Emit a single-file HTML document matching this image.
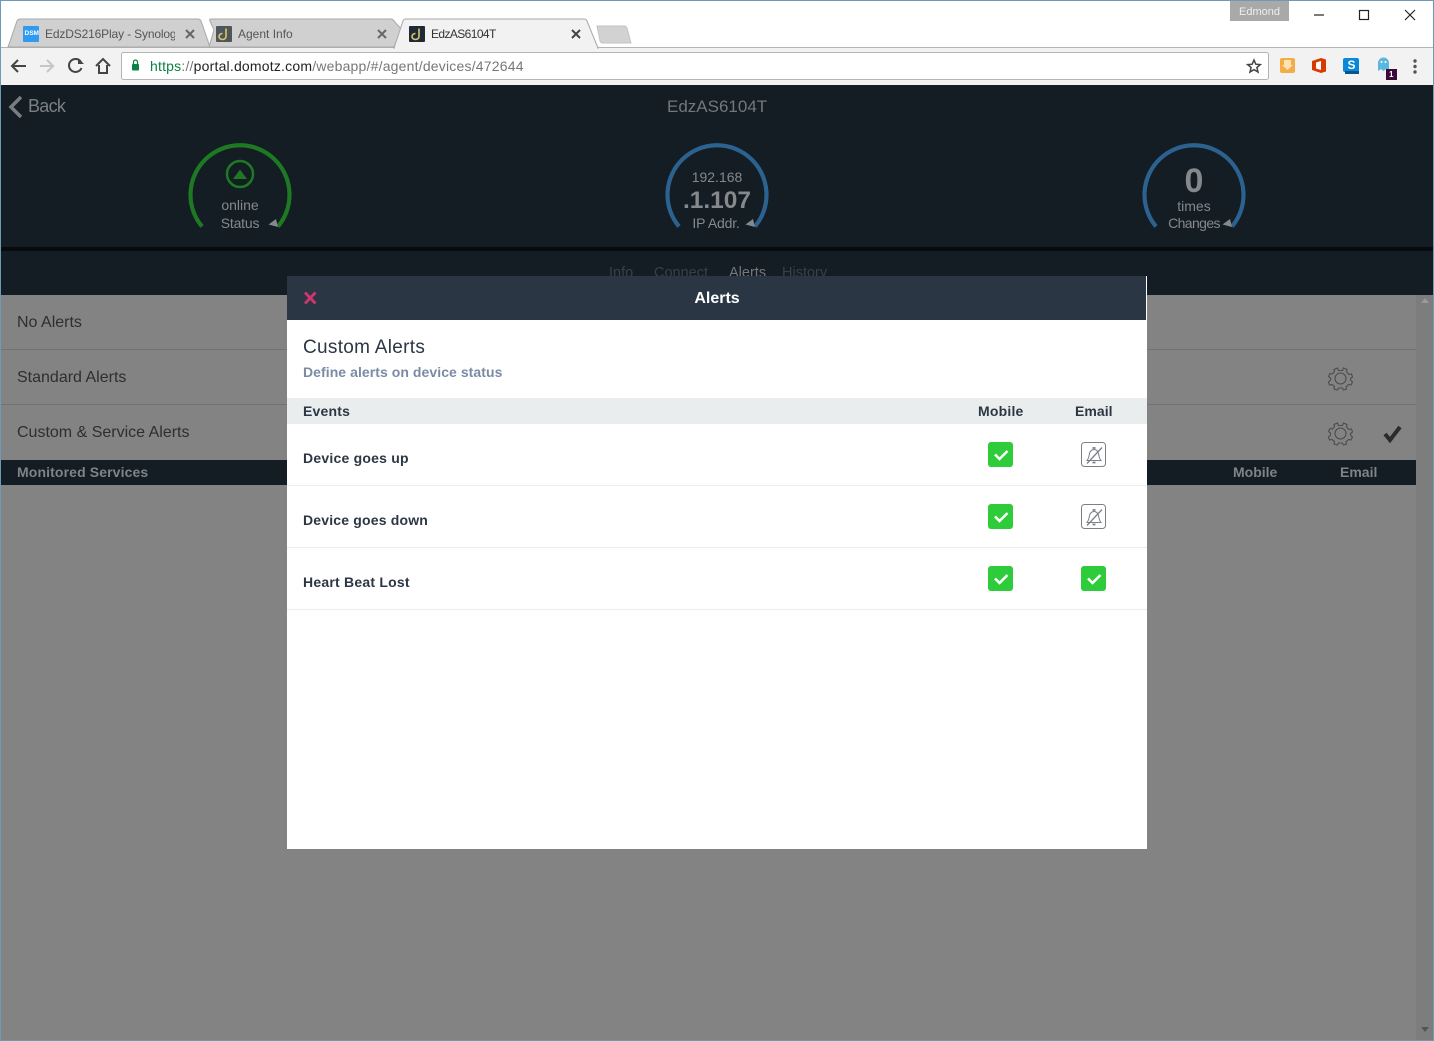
<!DOCTYPE html>
<html><head><meta charset="utf-8"><style>
*{box-sizing:border-box}
html,body{margin:0;padding:0;width:1434px;height:1041px;overflow:hidden;background:#838383;font-family:"Liberation Sans",sans-serif}
.a{position:absolute;white-space:nowrap}
svg{position:absolute;overflow:visible}
.row{position:absolute;left:1px;width:1415px;height:1px;background:#727272}
.lbl{font-size:16px;color:#2e2e2e;left:17px}
.ev{font-size:14px;font-weight:bold;color:#2c3644;left:303px;letter-spacing:.22px}
.hd{font-size:14px;font-weight:bold;color:#2c3644;letter-spacing:.2px}
.g{color:#85898b;text-align:center;transform:translateX(-50%)}
.ml{position:absolute;left:287px;width:860px;height:1px;background:#e9eded}
.nav{font-size:14.5px;line-height:16px;top:265px;color:#3a4047}
</style></head><body>
<div class="a" style="left:0;top:0;width:1434px;height:85px;background:#fff"></div>
<div class="a" style="left:0;top:47px;width:1434px;height:38px;background:#f2f2f2;border-top:1px solid #b4b4b4"></div>
<svg style="left:0;top:0" width="1434" height="85">
<path d="M8 47L17 21Q18 19 20 19H198Q200 19 201 21L210 47Z" fill="#d0d0d0" stroke="#a8a8a8"/>
<path d="M209 47L214 30L210 21Q209 19 211 19H391Q393 19 394 21L402 30L394 47Z" fill="#d0d0d0" stroke="#a8a8a8"/>
<path d="M394 48L403 21Q404 19 406 19H584Q586 19 587 21L598 48Z" fill="#f2f2f2" stroke="#a8a8a8"/>
<rect x="395" y="47" width="202" height="2" fill="#f2f2f2"/>
<path d="M597 26H624Q626 26 627 28L631 43H603Q601 43 600 41Z" fill="#d2d2d2" stroke="#c4c4c4"/>
<rect x="23" y="26" width="16" height="16" rx="1" fill="#2f9af0"/>
<rect x="216" y="26" width="16" height="16" rx="1" fill="#50555a"/>
<rect x="409" y="26" width="16" height="16" rx="1" fill="#1e2a38"/>
<path d="M226 28.500V36.500A3.500 3 0 1 1 222.500 33.500" fill="none" stroke="#d9c66b" stroke-width="1.600"/>
<path d="M419 28.500V36.500A3.500 3 0 1 1 415.500 33.500" fill="none" stroke="#d9c66b" stroke-width="1.600"/>
<g stroke-width="2" fill="none">
<path d="M186 30L194 38M194 30L186 38" stroke="#666"/><path d="M378 30L386 38M386 30L378 38" stroke="#666"/><path d="M572 30L580 38M580 30L572 38" stroke="#444"/>
</g>
<g fill="none" stroke-width="2">
<path d="M26 66H12M18 60L12 66L18 72" stroke="#444"/>
<path d="M54 66H40M47 60L53 66L47 72" stroke="#c6c6c6"/>
<path d="M81 62A6.500 6.500 0 1 0 81.500 68" stroke="#444"/>
<path d="M96 66L103 59L110 66M99 65V73H107V65" stroke="#444"/>
</g>
<path d="M78 58V64H84Z" fill="#444"/>
<rect x="121.500" y="52.500" width="1147" height="27" rx="2" fill="#fff" stroke="#b4b4b4"/>
<rect x="132" y="64" width="7" height="6.500" rx="1" fill="#0b8043"/>
<path d="M133.500 64V62A2 2 0 0 1 137.500 62V64" fill="none" stroke="#0b8043" stroke-width="1.300"/>
<path d="M1254 60L1255.800 64.200L1260.300 64.600L1256.900 67.500L1258 72L1254 69.600L1250 72L1251.100 67.500L1247.700 64.600L1252.200 64.200Z" fill="none" stroke="#444" stroke-width="1.500"/>
<rect x="1280" y="58" width="15" height="15" rx="2" fill="#f4ac45"/>
<path d="M1284 60H1291V65H1293L1287.500 70L1282 65H1284Z" fill="#fde2b5"/>
<path d="M1312 61L1321 58L1326 59.500V71.500L1321 73L1312 70Z" fill="#d83b01"/>
<path d="M1316 62.500L1321 61V70L1316 68.500Z" fill="#fff"/>
<rect x="1343" y="58" width="16" height="14" rx="2" fill="#0b88d8"/>
<rect x="1345" y="71" width="14" height="3" fill="#07568a"/>
<path d="M1378 71V63A5.500 5.500 0 0 1 1389 63V71L1386 69L1383.500 71L1381 69Z" fill="#5bb7dd"/>
<circle cx="1381.500" cy="62" r="1" fill="#fff"/><circle cx="1385.500" cy="62" r="1" fill="#fff"/>
<rect x="1386" y="69" width="11" height="11" fill="#3a0a3a"/>
<circle cx="1415" cy="61" r="1.700" fill="#555"/><circle cx="1415" cy="66.500" r="1.700" fill="#555"/><circle cx="1415" cy="72" r="1.700" fill="#555"/>
<path d="M1314 15H1324" stroke="#222" stroke-width="1.200"/>
<rect x="1359.500" y="10.500" width="9" height="9" fill="none" stroke="#222" stroke-width="1.200"/>
<path d="M1405 10L1415 20M1415 10L1405 20" stroke="#222" stroke-width="1.200"/>
</svg>
<div class="a" style="left:24.500px;top:29px;font-size:6.500px;font-weight:bold;color:#fff;line-height:10px">DSM</div>
<div class="a" style="left:45px;top:27px;width:130px;overflow:hidden;font-size:12px;color:#555;line-height:15px;letter-spacing:-.15px">EdzDS216Play - Synology</div>
<div class="a" style="left:238px;top:27px;font-size:12px;color:#555;line-height:15px">Agent Info</div>
<div class="a" style="left:431px;top:27px;font-size:12px;color:#333;line-height:15px;letter-spacing:-.6px">EdzAS6104T</div>
<div class="a" style="left:1230px;top:0;width:59px;height:21px;background:#a9a9a9;color:#eee;font-size:11px;line-height:24px;text-align:center">Edmond</div>
<div class="a" style="left:150px;top:58px;font-size:14px;line-height:17px;color:#777;letter-spacing:.2px"><span style="color:#0b8043">https</span>://<span style="color:#222">portal.domotz.com</span>/webapp/#/agent/devices/472644</div>
<div class="a" style="left:1347.500px;top:59px;font-size:12px;line-height:13px;font-weight:bold;color:#fff">S</div>
<div class="a" style="left:1389px;top:70px;font-size:8px;line-height:10px;font-weight:bold;color:#fff">1</div>

<div class="a" style="left:0;top:85px;width:1434px;height:210px;background:#141c24"></div>
<div class="a" style="left:0;top:247px;width:1434px;height:4px;background:#080a0d"></div>
<div class="a" style="left:1416px;top:295px;width:17px;height:746px;background:#7d7d7d"></div>
<div class="a" style="left:1px;top:460px;width:1415px;height:25px;background:#141c24"></div>
<div class="row" style="top:349px"></div><div class="row" style="top:404px"></div>

<svg style="left:0;top:85px" width="1434" height="410">
<path d="M21 12L11 22L21 32" fill="none" stroke="#7a7d80" stroke-width="3.500"/>
<g fill="none" stroke-width="4.200">
<path d="M202 141.500A49.500 49.500 0 1 1 278 141.500" stroke="#1d7a23"/>
<path d="M679 141.500A49.500 49.500 0 1 1 755 141.500" stroke="#2c628f"/>
<path d="M1156 141.500A49.500 49.500 0 1 1 1232 141.500" stroke="#2c628f"/>
</g>
<circle cx="240" cy="89" r="13" fill="none" stroke="#1d7a23" stroke-width="2.500"/>
<path d="M233 94L240 84.500L247 94Z" fill="#1d7a23"/>
<path d="M268.500 139.500L276 134L278 142Z" fill="#85898a"/>
<path d="M745.500 139.500L753 134L755 142Z" fill="#85898a"/>
<path d="M1222.500 139.500L1230 134L1232 142Z" fill="#85898a"/>
<g fill="none" stroke="#4c4c4c" stroke-width="1.100">
<circle cx="1340.500" cy="293.500" r="5.500"/>
<path d="M1337.500 283L1338.500 285.500L1342.500 285.500L1343.500 283L1347 284.500L1346.500 287L1349 289.500L1351.500 289L1352.500 292L1350.500 293.500L1350.500 295L1352.500 297L1351 300L1348.500 299.500L1346 302L1346.500 304L1343.500 305L1342.500 303L1338.500 303L1337.500 305L1334 304L1334.500 301.500L1332 299.500L1329.500 300L1328.500 297L1330.500 295L1330.500 293L1328.500 291.500L1330 288.500L1332.500 289L1334.500 286.500L1334 284.500Z"/>
<circle cx="1340.500" cy="348.500" r="5.500"/>
<path transform="translate(0 55)" d="M1337.500 283L1338.500 285.500L1342.500 285.500L1343.500 283L1347 284.500L1346.500 287L1349 289.500L1351.500 289L1352.500 292L1350.500 293.500L1350.500 295L1352.500 297L1351 300L1348.500 299.500L1346 302L1346.500 304L1343.500 305L1342.500 303L1338.500 303L1337.500 305L1334 304L1334.500 301.500L1332 299.500L1329.500 300L1328.500 297L1330.500 295L1330.500 293L1328.500 291.500L1330 288.500L1332.500 289L1334.500 286.500L1334 284.500Z"/>
</g>
<path d="M1385 349L1390 355L1400 342" fill="none" stroke="#2b2b2b" stroke-width="4"/>
<path d="M1421 221L1425 216L1429 221Z" fill="#9a9a9a" transform="translate(0 -3)"/>
<path d="M1421 942L1425 947L1429 942Z" fill="#555"/>
</svg>

<div class="a" style="left:28px;top:96px;font-size:18px;line-height:21px;color:#7d8083;letter-spacing:-.7px">Back</div>
<div class="a" style="left:667px;top:97px;font-size:17px;line-height:20px;color:#75787b">EdzAS6104T</div>
<div class="a g" style="left:240px;top:197px;font-size:14px;line-height:16px">online</div>
<div class="a g" style="left:240px;top:215px;font-size:14px;line-height:16px;letter-spacing:-.2px">Status</div>
<div class="a g" style="left:717px;top:169px;font-size:14px;line-height:16px">192.168</div>
<div class="a g" style="left:717px;top:186px;font-size:24.500px;line-height:29px;font-weight:bold">.1.107</div>
<div class="a g" style="left:716px;top:215px;font-size:14px;line-height:16px;letter-spacing:-.2px">IP Addr.</div>
<div class="a g" style="left:1194px;top:162px;font-size:34px;line-height:38px;font-weight:bold">0</div>
<div class="a g" style="left:1194px;top:198px;font-size:14px;line-height:16px">times</div>
<div class="a g" style="left:1194px;top:215px;font-size:14px;line-height:16px;letter-spacing:-.6px">Changes</div>
<div class="a nav" style="left:609px">Info</div>
<div class="a nav" style="left:654px">Connect</div>
<div class="a nav" style="left:729px;color:#75787b">Alerts</div>
<div class="a nav" style="left:782px">History</div>

<div class="a lbl" style="top:314px;line-height:18px">No Alerts</div>
<div class="a lbl" style="top:369px;line-height:18px">Standard Alerts</div>
<div class="a lbl" style="top:424px;line-height:18px">Custom &amp; Service Alerts</div>
<div class="a" style="left:17px;top:464px;font-size:14px;line-height:16px;font-weight:bold;color:#7f8486;letter-spacing:.12px">Monitored Services</div>
<div class="a" style="left:1233px;top:464px;font-size:14px;line-height:16px;font-weight:bold;color:#7f8486">Mobile</div>
<div class="a" style="left:1340px;top:464px;font-size:14px;line-height:16px;font-weight:bold;color:#7f8486">Email</div>

<div class="a" style="left:287px;top:276px;width:860px;height:573px;background:#fff"></div>
<div class="a" style="left:287px;top:276px;width:859px;height:44px;background:#2a3644"></div>
<svg style="left:0;top:0" width="1434" height="1041">
<path d="M305 292.500L315.500 303.500M315.500 292.500L305 303.500" stroke="#d0356f" stroke-width="2.800" fill="none"/>
</svg>
<div class="a" style="left:287px;top:290px;width:860px;text-align:center;font-size:16px;line-height:18px;font-weight:bold;color:#fff">Alerts</div>
<div class="a" style="left:303px;top:337px;font-size:19px;line-height:22px;color:#2c3644;letter-spacing:.3px">Custom Alerts</div>
<div class="a" style="left:303px;top:364px;font-size:14px;line-height:17px;font-weight:bold;color:#7a8ba3;letter-spacing:.06px">Define alerts on device status</div>
<div class="a" style="left:287px;top:398px;width:860px;height:26px;background:#e9eded"></div>
<div class="a hd" style="left:303px;top:403px;line-height:16px">Events</div>
<div class="a hd" style="left:978px;top:403px;line-height:16px">Mobile</div>
<div class="a hd" style="left:1075px;top:403px;line-height:16px;letter-spacing:.05px">Email</div>
<div class="a ev" style="top:450px;line-height:16px">Device goes up</div>
<div class="a ev" style="top:512px;line-height:16px;letter-spacing:.18px">Device goes down</div>
<div class="a ev" style="top:574px;line-height:16px">Heart Beat Lost</div>
<div class="ml" style="top:485px"></div><div class="ml" style="top:547px"></div><div class="ml" style="top:609px"></div>
<svg style="left:0;top:0" width="1434" height="1041">
<g fill="#2ecc3a">
<rect x="988" y="442" width="25" height="25" rx="3"/>
<rect x="988" y="504" width="25" height="25" rx="3"/>
<rect x="988" y="566" width="25" height="25" rx="3"/>
<rect x="1081" y="566" width="25" height="25" rx="3"/>
</g>
<g fill="none" stroke="#fff" stroke-width="2.500">
<path d="M995 454.500L999.500 459L1007.500 451"/>
<path d="M995 516.500L999.500 521L1007.500 513"/>
<path d="M995 578.500L999.500 583L1007.500 575"/>
<path d="M1088 578.500L1092.500 583L1100.500 575"/>
</g>
<g fill="none" stroke="#7b8088">
<rect x="1081.500" y="442.500" width="24" height="24" rx="3"/>
<rect x="1081.500" y="504.500" width="24" height="24" rx="3"/>
<g stroke-width="1">
<path d="M1087 460.500H1101C1099 458 1099 456 1098.500 453.500C1098 451 1096 449.500 1094 449.500C1092 449.500 1090 451 1089.500 453.500C1089 456 1089 458 1087 460.500Z"/>
<path d="M1087 463.500L1102 447.500" stroke-width="1.300"/>
<path d="M1092.500 448H1095.500M1092.500 462.500H1095.500" stroke-width="1.800"/>
</g>
<g transform="translate(0 62)" stroke-width="1">
<path d="M1087 460.500H1101C1099 458 1099 456 1098.500 453.500C1098 451 1096 449.500 1094 449.500C1092 449.500 1090 451 1089.500 453.500C1089 456 1089 458 1087 460.500Z"/>
<path d="M1087 463.500L1102 447.500" stroke-width="1.300"/>
<path d="M1092.500 448H1095.500M1092.500 462.500H1095.500" stroke-width="1.800"/>
</g>
</g>
</svg>
<div class="a" style="left:0;top:0;width:1434px;height:1px;background:#6d9bb3"></div>
<div class="a" style="left:0;top:0;width:1px;height:1041px;background:#6d9bb3"></div>
<div class="a" style="left:1433px;top:0;width:1px;height:1041px;background:#6d9bb3"></div>
<div class="a" style="left:0;top:1040px;width:1434px;height:1px;background:#6d9bb3"></div>
</body></html>
